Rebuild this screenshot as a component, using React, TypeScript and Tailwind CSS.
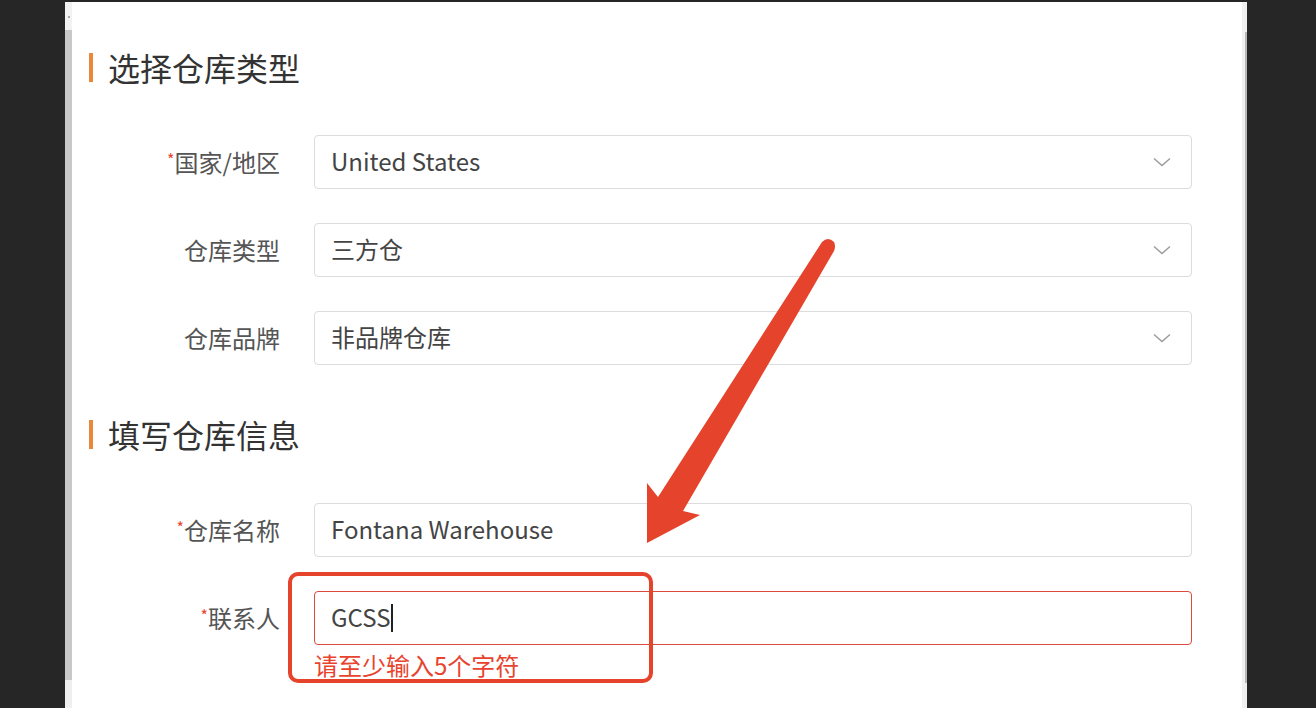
const font = { fontFamily: '"Noto Sans CJK SC", "Noto Sans", sans-serif' };

const Chevron = () => (
  <svg width="18" height="10" viewBox="0 0 18 10" fill="none">
    <path d="M1 1.5 L9 8.5 L17 1.5" stroke="#9a9a9a" strokeWidth="1.4" />
  </svg>
);

const SectionTitle = ({ title }: { title: string }) => (
  <div className="flex items-center h-[40px] pl-[17px]">
    <div className="w-[4px] h-[29px] bg-[#e8883a]" />
    <h2 className="ml-[15px] text-[32px] leading-[40px] text-[#333]">{title}</h2>
  </div>
);

const Label = ({ text, required }: { text: string; required?: boolean }) => (
  <div className="w-[192px] ml-[16px] shrink-0 text-right text-[24px] text-[#555] leading-[54px]">
    {required && <span className="text-[#e8432e] text-[16px] align-top relative top-[-3px]">*</span>}
    {text}
  </div>
);

const SelectRow = ({ label, value, required }: { label: string; value: string; required?: boolean }) => (
  <div className="flex items-center">
    <Label text={label} required={required} />
    <div className="ml-[34px] mr-[50px] flex-1 h-[54px] border border-[#dcdcdc] rounded-[4px] flex items-center justify-between pl-[16px] pr-[20px]">
      <span className="text-[24px] text-[#444] relative top-[-1px]">{value}</span>
      <Chevron />
    </div>
  </div>
);

export default function App() {
  return (
    <div className="w-[1316px] h-[708px] bg-[#262626] flex pt-[2px] overflow-hidden" style={font}>
      <div className="w-[65px] shrink-0" />
      <div className="w-[1182px] bg-white flex">
        <div className="w-[7px] shrink-0 flex flex-col">
          <div className="h-[28px] bg-[#f2f2f2] flex justify-center pt-[14px]">
            <div className="w-[2px] h-[2px] bg-[#aaa]" />
          </div>
          <div className="h-[650px] bg-[#c8c8c8]" />
          <div className="flex-1 bg-[#efefef]" />
        </div>

        <div className="flex-1 relative">
          <div className="pt-[45px]">
            <SectionTitle title="选择仓库类型" />
            <div className="mt-[48px] flex flex-col gap-[34px]">
              <SelectRow label="国家/地区" value="United States" required />
              <SelectRow label="仓库类型" value="三方仓" />
              <SelectRow label="仓库品牌" value="非品牌仓库" />
            </div>

            <div className="mt-[49px]">
              <SectionTitle title="填写仓库信息" />
            </div>

            <div className="mt-[49px] flex flex-col gap-[34px]">
              <div className="flex items-center">
                <Label text="仓库名称" required />
                <div className="ml-[34px] mr-[50px] flex-1 h-[54px] border border-[#dcdcdc] rounded-[4px] flex items-center pl-[16px]">
                  <span className="text-[24px] text-[#444] relative top-[-1px]">Fontana Warehouse</span>
                </div>
              </div>
              <div>
                <div className="flex items-center">
                  <Label text="联系人" required />
                  <div className="ml-[34px] mr-[50px] flex-1 h-[54px] border-[1.5px] border-[#dc4a3c] rounded-[4px] flex items-center pl-[16px]">
                    <span className="text-[24px] text-[#444] relative top-[-1px]">GCSS</span>
                    <span className="w-[1.5px] h-[28px] bg-[#222] ml-[1px]" />
                  </div>
                </div>
                <div className="ml-[242px] mt-[6px] text-[24px] leading-[28px] text-[#e8432e]">请至少输入5个字符</div>
              </div>
            </div>
          </div>

          {/* annotation overlay */}
          <div className="absolute left-[216px] top-[570px] w-[365px] h-[111px] border-[4px] border-[#e5432b] rounded-[10px]" />
          <svg className="absolute left-0 top-0 pointer-events-none" width="1170" height="706">
            <g transform="translate(-72,-2)" fill="#e5432b">
              <path d="M822 242 Q828 236 834 242 Q836 246 834 251 L683 511 L700 515 L647 543 L647 483 L658 497 Z" />
            </g>
          </svg>
        </div>

        <div className="w-[5px] shrink-0 bg-[#f0f0f0] flex flex-col items-end">
          <div className="h-[30px]" />
          <div className="w-[2px] h-[651px] bg-[#b8b8b8]" />
        </div>
      </div>
    </div>
  );
}
